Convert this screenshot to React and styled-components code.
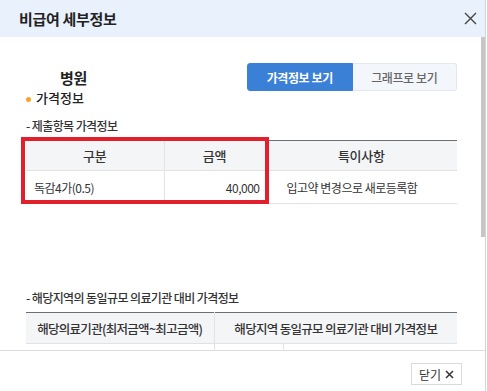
import React from "react"
import styled, { createGlobalStyle } from "styled-components"

const GlobalStyle = createGlobalStyle`
  html, body {
    margin: 0;
    padding: 0;
    background: #fff;
  }
  body {
    font-family: "Noto Sans CJK KR", "Noto Sans", sans-serif;
    color: #222;
  }
  * {
    box-sizing: border-box;
  }
`

const submitted = [{ name: "독감4가(0.5)", price: "40,000", note: "입고약 변경으로 새로등록함" }]

const App = () => {
  return (
    <>
      <GlobalStyle />
      <Modal>
        <Header>
          <Title>비급여 세부정보</Title>
          <CloseButton aria-label="닫기">
            <svg width="13" height="13" viewBox="0 0 13 13">
              <path d="M1 1 L12 12 M12 1 L1 12" stroke="#444" strokeWidth="1.4" fill="none" />
            </svg>
          </CloseButton>
        </Header>
        <BodyRow>
          <Body>
            <TopRow>
              <HospitalName>병원</HospitalName>
              <Toggle>
                <ToggleButton $active>가격정보 보기</ToggleButton>
                <ToggleButton>그래프로 보기</ToggleButton>
              </Toggle>
            </TopRow>
            <SectionTitle>가격정보</SectionTitle>
            <SubTitle $gap="12px">- 제출항목 가격정보</SubTitle>
            <TableWrap>
              <Table>
                <colgroup>
                  <col style={{ width: 138 }} />
                  <col style={{ width: 101 }} />
                  <col style={{ width: 192 }} />
                </colgroup>
                <thead>
                  <tr>
                    <Th>구분</Th>
                    <Th>금액</Th>
                    <Th>특이사항</Th>
                  </tr>
                </thead>
                <tbody>
                  {submitted.map((row) => (
                    <tr key={row.name}>
                      <Td>{row.name}</Td>
                      <Td $align="right">{row.price}</Td>
                      <Td $pad="21px">{row.note}</Td>
                    </tr>
                  ))}
                </tbody>
              </Table>
              <Highlight />
            </TableWrap>
            <SubTitle $gap="86px">- 해당지역의 동일규모 의료기관 대비 가격정보</SubTitle>
            <Table>
              <colgroup>
                <col style={{ width: 188 }} />
                <col style={{ width: 69 }} />
                <col style={{ width: 174 }} />
              </colgroup>
              <thead>
                <tr>
                  <Th $h="31px" $small>해당의료기관(최저금액~최고금액)</Th>
                  <Th $h="31px" $small colSpan={2}>
                    해당지역 동일규모 의료기관 대비 가격정보
                  </Th>
                </tr>
              </thead>
              <tbody>
                <tr>
                  <Td $h="44px" />
                  <Td $h="44px" />
                  <Td $h="44px" />
                </tr>
              </tbody>
            </Table>
          </Body>
          <ScrollTrack>
            <ScrollThumb />
          </ScrollTrack>
        </BodyRow>
        <Footer>
          <CloseTextButton>
            닫기
            <svg width="9" height="9" viewBox="0 0 9 9">
              <path d="M1 1 L8 8 M8 1 L1 8" stroke="#333" strokeWidth="1.5" fill="none" />
            </svg>
          </CloseTextButton>
        </Footer>
      </Modal>
    </>
  )
}

const Modal = styled.div`
  width: 486px;
  height: 391px;
  display: flex;
  flex-direction: column;
  border-right: 1px solid #d4d4d4;
  background: #fff;
  overflow: hidden;
`
const Header = styled.div`
  flex: none;
  height: 37px;
  display: flex;
  align-items: center;
  justify-content: space-between;
  padding: 0 8px 0 19px;
  background: #e9f1fc;
`
const Title = styled.h2`
  margin: 0;
  font-size: 15px;
  font-weight: 700;
  color: #222;
  letter-spacing: -0.3px;
`
const CloseButton = styled.button`
  border: 0;
  background: none;
  padding: 0;
  width: 14px;
  height: 14px;
  display: flex;
  align-items: center;
  justify-content: center;
  cursor: pointer;
`
const BodyRow = styled.div`
  flex: 1;
  min-height: 0;
  display: flex;
`
const Body = styled.div`
  flex: 1;
  min-width: 0;
  overflow: hidden;
  padding: 26px 24px 0 26px;
`
const ScrollTrack = styled.div`
  flex: none;
  width: 4px;
  background: #fff;
`
const ScrollThumb = styled.div`
  height: 200px;
  background: #c6c6c6;
`
const TopRow = styled.div`
  display: flex;
  align-items: center;
  justify-content: space-between;
  height: 28px;
`
const HospitalName = styled.div`
  padding-left: 34px;
  font-size: 15px;
  font-weight: 700;
  color: #222;
  letter-spacing: -0.3px;
`
const Toggle = styled.div`
  display: flex;
  width: 210px;
  height: 28px;
`
const ToggleButton = styled.button`
  flex: 1;
  border: 1px solid ${(p) => (p.$active ? "#3a80d6" : "#e3e8ee")};
  border-left: ${(p) => (p.$active ? "1px solid #3a80d6" : "0")};
  background: ${(p) => (p.$active ? "#3a80d6" : "#f3f6fa")};
  color: ${(p) => (p.$active ? "#fff" : "#666")};
  border-radius: ${(p) => (p.$active ? "3px 0 0 3px" : "0 3px 3px 0")};
  font-family: inherit;
  font-size: 12px;
  font-weight: ${(p) => (p.$active ? 700 : 500)};
  letter-spacing: -0.4px;
  padding: 0;
  cursor: pointer;
`
const SectionTitle = styled.h3`
  margin: -1px 0 0;
  display: flex;
  align-items: center;
  font-size: 13px;
  line-height: 16px;
  font-weight: 500;
  color: #222;
  &::before {
    content: "";
    width: 5px;
    height: 5px;
    border-radius: 50%;
    background: #f4a52a;
    margin: 2px 5px 0 0;
  }
`
const SubTitle = styled.h4`
  margin: ${(p) => p.$gap || "11px"} 0 6px;
  font-size: 12px;
  line-height: 16px;
  font-weight: 500;
  color: #333;
  letter-spacing: -0.6px;
`
const TableWrap = styled.div`
  position: relative;
`
const Table = styled.table`
  width: 431px;
  border-collapse: collapse;
  table-layout: fixed;
  border-top: 1px solid #6f6f6f;
`
const Th = styled.th`
  height: ${(p) => p.$h || "30px"};
  padding: 0;
  background: #f4f5f7;
  border-bottom: 1px solid #e2e2e2;
  border-left: 1px solid #e2e2e2;
  font-size: ${(p) => (p.$small ? "12.5px" : "13px")};
  font-weight: 500;
  color: #333;
  letter-spacing: ${(p) => (p.$small ? "-0.7px" : "-0.3px")};
  white-space: nowrap;
  &:first-child {
    border-left: 0;
  }
`
const Td = styled.td`
  height: ${(p) => p.$h || "33px"};
  padding: 0 ${(p) => (p.$align === "right" ? "5px" : "0")} 0 ${(p) => p.$pad || "8px"};
  text-align: ${(p) => p.$align || "left"};
  border-bottom: 1px solid #e2e2e2;
  border-left: 1px solid #e2e2e2;
  font-size: 12px;
  color: #333;
  letter-spacing: -0.5px;
  &:first-child {
    border-left: 0;
  }
`
const Highlight = styled.div`
  position: absolute;
  left: -5px;
  top: -3px;
  width: 248px;
  height: 67px;
  border: 4px solid #e2202b;
  pointer-events: none;
`
const Footer = styled.div`
  flex: none;
  height: 41px;
  display: flex;
  justify-content: flex-end;
  align-items: flex-start;
  padding: 12px 23px 0 0;
  border-top: 1px solid #dcdcdc;
`
const CloseTextButton = styled.button`
  width: 51px;
  height: 22px;
  display: flex;
  align-items: center;
  justify-content: center;
  gap: 4px;
  border: 1px solid #dadada;
  background: #fff;
  font-family: inherit;
  font-size: 12px;
  color: #333;
  padding: 0;
  cursor: pointer;
`

export default App
